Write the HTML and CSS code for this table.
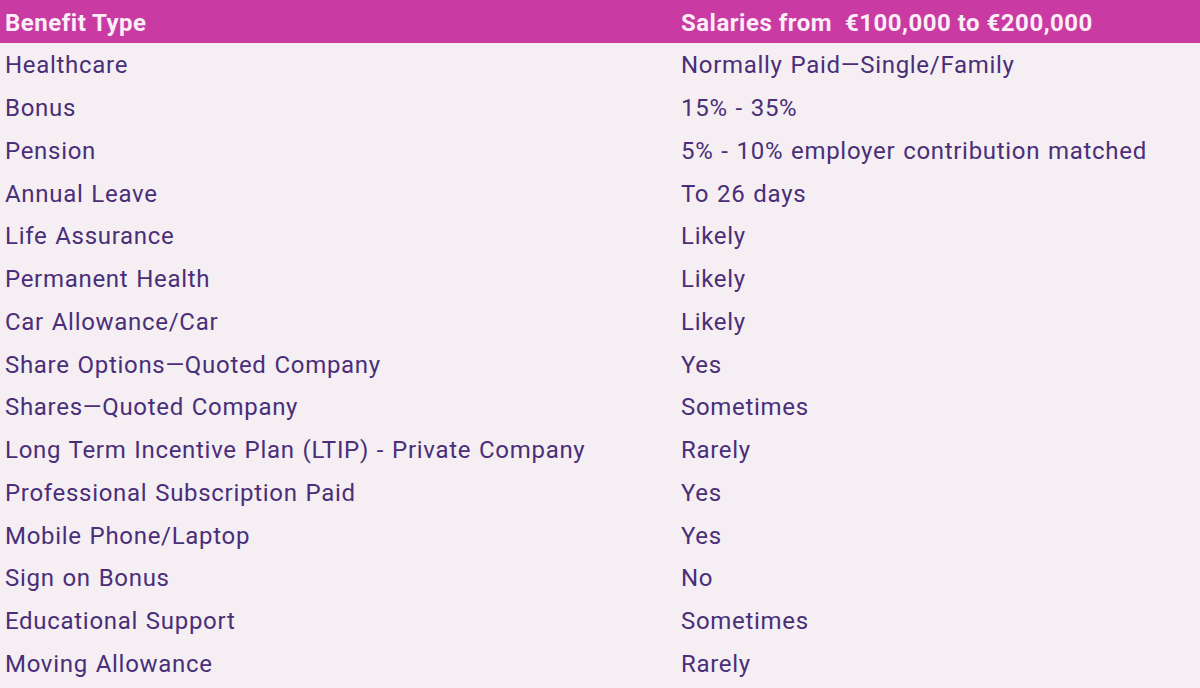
FILE: index.html
```html
<!DOCTYPE html>
<html>
<head>
<meta charset="utf-8">
<link rel="stylesheet" href="styles.css">
</head>
<body>
<div class="table">
  <div class="row head"><div class="c1">Benefit Type</div><div class="c2">Salaries from&nbsp; €100,000 to €200,000</div></div>
  <div class="row"><div class="c1">Healthcare</div><div class="c2">Normally Paid—Single/Family</div></div>
  <div class="row"><div class="c1">Bonus</div><div class="c2">15% - 35%</div></div>
  <div class="row"><div class="c1">Pension</div><div class="c2">5% - 10% employer contribution matched</div></div>
  <div class="row"><div class="c1">Annual Leave</div><div class="c2">To 26 days</div></div>
  <div class="row"><div class="c1">Life Assurance</div><div class="c2">Likely</div></div>
  <div class="row"><div class="c1">Permanent Health</div><div class="c2">Likely</div></div>
  <div class="row"><div class="c1">Car Allowance/Car</div><div class="c2">Likely</div></div>
  <div class="row"><div class="c1">Share Options—Quoted Company</div><div class="c2">Yes</div></div>
  <div class="row"><div class="c1">Shares—Quoted Company</div><div class="c2">Sometimes</div></div>
  <div class="row"><div class="c1">Long Term Incentive Plan (LTIP) - Private Company</div><div class="c2">Rarely</div></div>
  <div class="row"><div class="c1">Professional Subscription Paid</div><div class="c2">Yes</div></div>
  <div class="row"><div class="c1">Mobile Phone/Laptop</div><div class="c2">Yes</div></div>
  <div class="row"><div class="c1">Sign on Bonus</div><div class="c2">No</div></div>
  <div class="row"><div class="c1">Educational Support</div><div class="c2">Sometimes</div></div>
  <div class="row"><div class="c1">Moving Allowance</div><div class="c2">Rarely</div></div>
</div>
</body>
</html>
```
FILE: styles.css
```css
html, body {
  margin: 0;
  padding: 0;
  background: #f5eff4;
}
body {
  font-family: Roboto, "Liberation Sans", sans-serif;
  font-size: 24px;
  color: #4a2e78;
  width: 1200px;
  height: 688px;
  overflow: hidden;
}
.table {
  display: flex;
  flex-direction: column;
}
.row {
  display: grid;
  grid-template-columns: 675px 1fr;
  height: 42.75px;
  align-items: center;
  letter-spacing: 0.7px;
  word-spacing: 1.2px;
  padding-top: 2px;
  box-sizing: border-box;
}
.row.head {
  height: 43px;
  background: #c93ba3;
  color: #fbeef7;
  font-weight: 700;
  letter-spacing: 0.5px;
  word-spacing: 0;
}
.c1 {
  padding-left: 5px;
  white-space: nowrap;
}
.c2 {
  padding-left: 6px;
  white-space: nowrap;
}
```
